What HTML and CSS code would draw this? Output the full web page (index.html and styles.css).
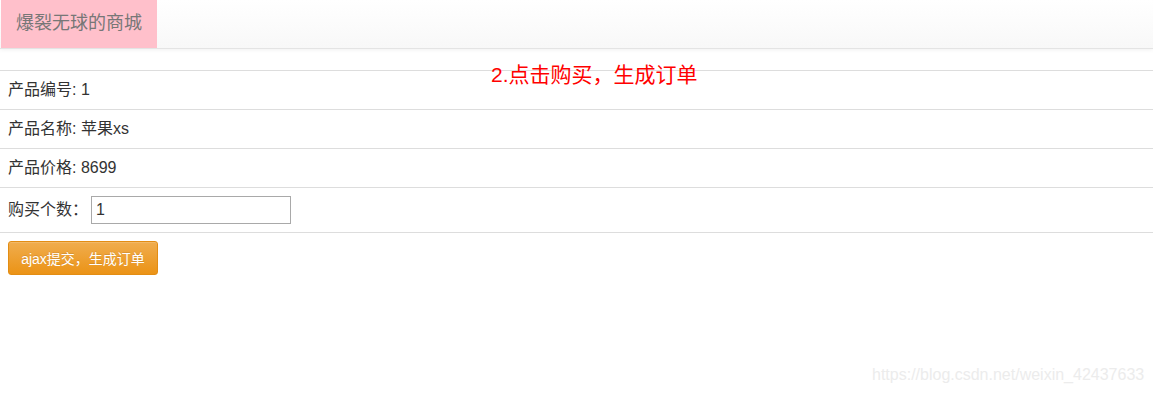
FILE: index.html
```html
<!DOCTYPE html>
<html lang="zh-CN">
<head>
<meta charset="utf-8">
<title>爆裂无球的商城</title>
<link rel="stylesheet" href="styles.css">
</head>
<body>
<nav class="navbar">
  <a class="brand" href="#">爆裂无球的商城</a>
</nav>
<div class="note">2.点击购买，生成订单</div>
<div class="table">
  <div class="row"><span>产品编号: 1</span></div>
  <div class="row"><span>产品名称: 苹果xs</span></div>
  <div class="row"><span>产品价格: 8699</span></div>
  <div class="row row-input"><label>购买个数：</label><input class="qty" type="text" value="1"></div>
  <div class="row row-btn"><button class="btn-warning" type="button">ajax提交，生成订单</button></div>
</div>
<div class="watermark">https://blog.csdn.net/weixin_42437633</div>
</body>
</html>
```
FILE: styles.css
```css
html, body {
  margin: 0;
  padding: 0;
  background: #fff;
}
body {
  font-family: "Liberation Sans", Arial, "Noto Sans CJK SC", sans-serif;
  font-size: 16px;
  color: #333;
  position: relative;
  height: 394px;
  overflow: hidden;
}
.navbar {
  height: 48px;
  display: flex;
  background: linear-gradient(to bottom, #ffffff 0%, #f8f8f8 100%);
  border-bottom: 1px solid #e4e4e4;
  box-shadow: 0 1px 4px rgba(0,0,0,0.06);
}
.brand {
  margin-left: 1px;
  width: 156px;
  height: 48px;
  background: #ffc0cb;
  color: #777;
  font-size: 18px;
  line-height: 46px;
  text-decoration: none;
  box-sizing: border-box;
  padding-left: 15px;
  white-space: nowrap;
}
.note {
  position: absolute;
  left: 491px;
  top: 61px;
  color: #ff0000;
  font-size: 21px;
  line-height: 28px;
}
.table {
  margin-top: 21px;
}
.row {
  border-top: 1px solid #ddd;
  height: 38px;
  display: flex;
  align-items: center;
  padding-left: 8px;
  line-height: 22px;
}
.row-input {
  height: 44px;
}
.row-input label {
  width: 83px;
}
.qty {
  width: 200px;
  height: 28px;
  box-sizing: border-box;
  border: 1px solid #a9a9a9;
  padding: 0 4px;
  font-family: "Liberation Sans", Arial, sans-serif;
  font-size: 16px;
  color: #333;
  margin: 0;
}
.row-btn {
  height: auto;
  align-items: flex-start;
  padding-top: 8px;
}
.btn-warning {
  width: 150px;
  height: 34px;
  background: linear-gradient(to bottom, #f0ad4e 0%, #eb9316 100%);
  border: 1px solid #e38d13;
  border-radius: 3px;
  color: #fff;
  font-family: "Liberation Sans", Arial, "Noto Sans CJK SC", sans-serif;
  font-size: 14px;
  padding: 0 10px;
  white-space: nowrap;
  box-shadow: inset 0 1px 0 rgba(255,255,255,0.15);
  text-shadow: 0 -1px 0 rgba(0,0,0,0.1);
}
.watermark {
  position: absolute;
  left: 872px;
  top: 366px;
  color: #ececec;
  font-size: 16px;
  font-family: "Liberation Sans", Arial, sans-serif;
}
```
